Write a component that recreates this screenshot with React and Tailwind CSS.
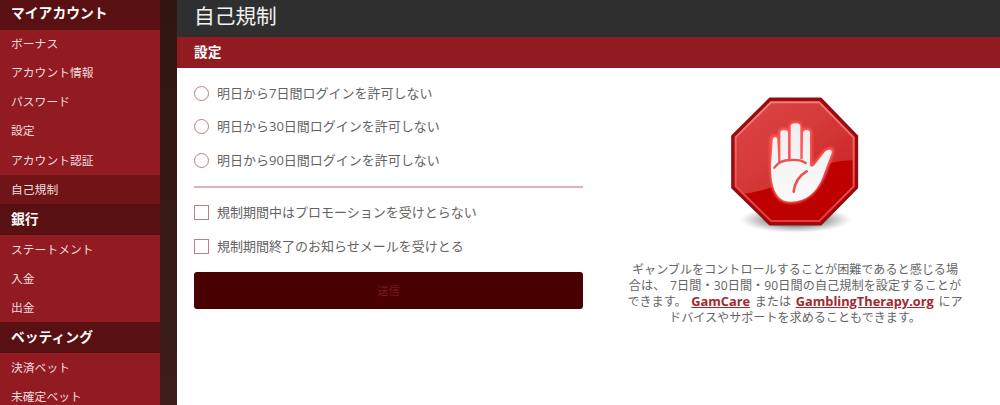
const menu = [
  {
    title: "マイアカウント",
    items: ["ボーナス", "アカウント情報", "パスワード", "設定", "アカウント認証", "自己規制"],
  },
  { title: "銀行", items: ["ステートメント", "入金", "出金"] },
  { title: "ベッティング", items: ["決済ベット", "未確定ベット"] },
];

const periods = [
  "明日から7日間ログインを許可しない",
  "明日から30日間ログインを許可しない",
  "明日から90日間ログインを許可しない",
];

const options = ["規制期間中はプロモーションを受けとらない", "規制期間終了のお知らせメールを受けとる"];

function Sidebar() {
  return (
    <nav className="w-40 shrink-0 bg-[#921b22] text-white">
      {menu.map((group, i) => (
        <div key={group.title}>
          <h2
            className={`${i === 0 ? "h-[29.5px] pb-[3px]" : "h-[30.8px] pb-px"} flex items-center bg-[#581013] pl-[11px] text-[13.8px] leading-none font-bold`}
          >
            {group.title}
          </h2>
          <ul>
            {group.items.map((item) => (
              <li
                key={item}
                className={`${item === "自己規制" ? "bg-[#701418]" : ""} flex h-[29.1px] items-center pl-[11px] text-[11.8px] leading-none text-[#f0dcdd]`}
              >
                {item}
              </li>
            ))}
          </ul>
        </div>
      ))}
    </nav>
  );
}

function StopSign() {
  return (
    <svg className="h-40 w-[170px]" viewBox="0 0 510 480" fill="none">
      <defs>
        <radialGradient id="shadow">
          <stop offset="0.5" stopColor="#555" stopOpacity="0.6" />
          <stop offset="0.8" stopColor="#777" stopOpacity="0.25" />
          <stop offset="1" stopColor="#999" stopOpacity="0" />
        </radialGradient>
        <linearGradient id="gloss" x1="0" y1="0" x2="1" y2="1">
          <stop offset="0" stopColor="#dc4545" />
          <stop offset="0.45" stopColor="#d63a3a" />
          <stop offset="1" stopColor="#c92020" />
        </linearGradient>
        <linearGradient id="edge" x1="0" y1="0" x2="0" y2="1">
          <stop offset="0" stopColor="#f08080" />
          <stop offset="1" stopColor="#e03c3c" />
        </linearGradient>
        <linearGradient id="palm" x1="0" y1="0" x2="0" y2="1">
          <stop offset="0" stopColor="#eeeeee" />
          <stop offset="1" stopColor="#fafafa" />
        </linearGradient>
        <clipPath id="face">
          <path d="M183 52H328L431 157V304L328 408H183L77 304V157Z" />
        </clipPath>
        <filter id="glow" x="-20%" y="-20%" width="140%" height="140%">
          <feGaussianBlur stdDeviation="3" />
        </filter>
      </defs>
      <ellipse cx="257" cy="404" rx="168" ry="40" fill="url(#shadow)" />
      <path d="M180 41H332L441 153V308L332 418H180L67 308V153Z" fill="#bd0000" stroke="#8b1015" strokeWidth="7" strokeLinejoin="round" />
      <path d="M182 49H329L434 156V226C285 226 255 315 75 329V156Z" fill="url(#gloss)" clipPath="url(#face)" />
      <path d="M183 52H328L431 157V304L328 408H183L77 304V157Z" stroke="url(#edge)" strokeWidth="6" strokeLinejoin="round" />
      {/* raised hand: soft red halo first, then the shape */}
      <path
        d="M184 240V164Q184 155 193 155Q202 155 202 164V222H210V144Q210 134 222 134Q234 134 234 144V220H242V124Q242 114 257 114Q271 114 271 124V220H279V144Q279 134 290 134Q301 134 301 144V243H310L344 201Q351 192 362 192Q369 195 365 206C348 252 326 350 240 350C200 350 184 315 184 240Z"
        stroke="#ff5555"
        strokeWidth="11"
        filter="url(#glow)"
      />
      <path
        d="M183 240L188 164Q189 156 195 156Q202 156 202 164L205 232H211V144Q211 135 222 135Q234 135 234 144V222H242V124Q242 115 257 115Q271 115 271 124V222H278L279 144Q280 135 290 135Q300 135 300 144V243Q309 248 316 237L344 201Q351 193 361 194Q368 197 364 207L338 276C322 316 295 350 240 350C198 350 182 305 183 240Z"
        fill="url(#palm)"
      />
      <path d="M193 248Q208 225 242 225Q271 223 287 234" stroke="#e55555" strokeWidth="7" strokeLinecap="round" />
      <path d="M251 320Q256 278 290 259" stroke="#e55555" strokeWidth="8" strokeLinecap="round" />
    </svg>
  );
}

function Choice({ label, round }) {
  return (
    <label className="flex h-[33.5px] items-center">
      <span className={`${round ? "rounded-full" : ""} size-[15px] shrink-0 border border-[#c47a7e]`} />
      <span className="ml-2 text-[13px] leading-none whitespace-nowrap text-[#646464]">{label}</span>
    </label>
  );
}

export default function App() {
  return (
    <div className="flex h-[405px] w-[1000px] overflow-hidden bg-linear-to-b from-[#301511] to-[#3c1d19] font-['Open_Sans','Noto_Sans_CJK_JP',sans-serif]">
      <Sidebar />
      <main className="ml-[17px] flex min-w-0 flex-1 flex-col bg-white">
        <h1 className="flex h-[36.5px] shrink-0 items-center bg-[#2f2f2f] pb-[3px] pl-[17px] text-[20.7px] leading-none text-[#f1f1f1]">
          自己規制
        </h1>
        <h2 className="flex h-[31px] shrink-0 items-center bg-[#921b22] pl-[17px] text-[13.7px] leading-none font-bold text-white">
          設定
        </h2>
        <div className="flex pl-[17px]">
          <form className="w-[389px] pt-[9px]">
            {periods.map((label) => (
              <Choice key={label} label={label} round />
            ))}
            <hr className="mt-[9px] mb-2 h-0.5 border-0 bg-[#dfb3b5]" />
            {options.map((label) => (
              <Choice key={label} label={label} />
            ))}
            <button
              type="button"
              className="mt-[9px] flex h-[37px] w-full items-center justify-center rounded-[3px] bg-[#480000] text-[11px] leading-none text-[#7a1a1e]"
            >
              送信
            </button>
          </form>
          <aside className="ml-[35px] flex w-[354px] flex-col items-center pt-[17px]">
            <StopSign />
            <p className="mt-[17px] text-center text-[12.1px] leading-[16.3px] [word-spacing:1.5px] whitespace-nowrap text-[#666]">
              ギャンブルをコントロールすることが困難であると感じる場
              <br />
              <span className="tracking-[0.1px]">合は、 7日間・30日間・90日間の自己規制を設定することが</span>
              <br />
              できます。 <a className="text-[12.8px] leading-none font-bold text-[#a3272e] underline">GamCare</a> または{" "}
              <a className="text-[12.8px] leading-none font-bold text-[#a3272e] underline">GamblingTherapy.org</a> にア
              <br />
              ドバイスやサポートを求めることもできます。
            </p>
          </aside>
        </div>
      </main>
    </div>
  );
}
